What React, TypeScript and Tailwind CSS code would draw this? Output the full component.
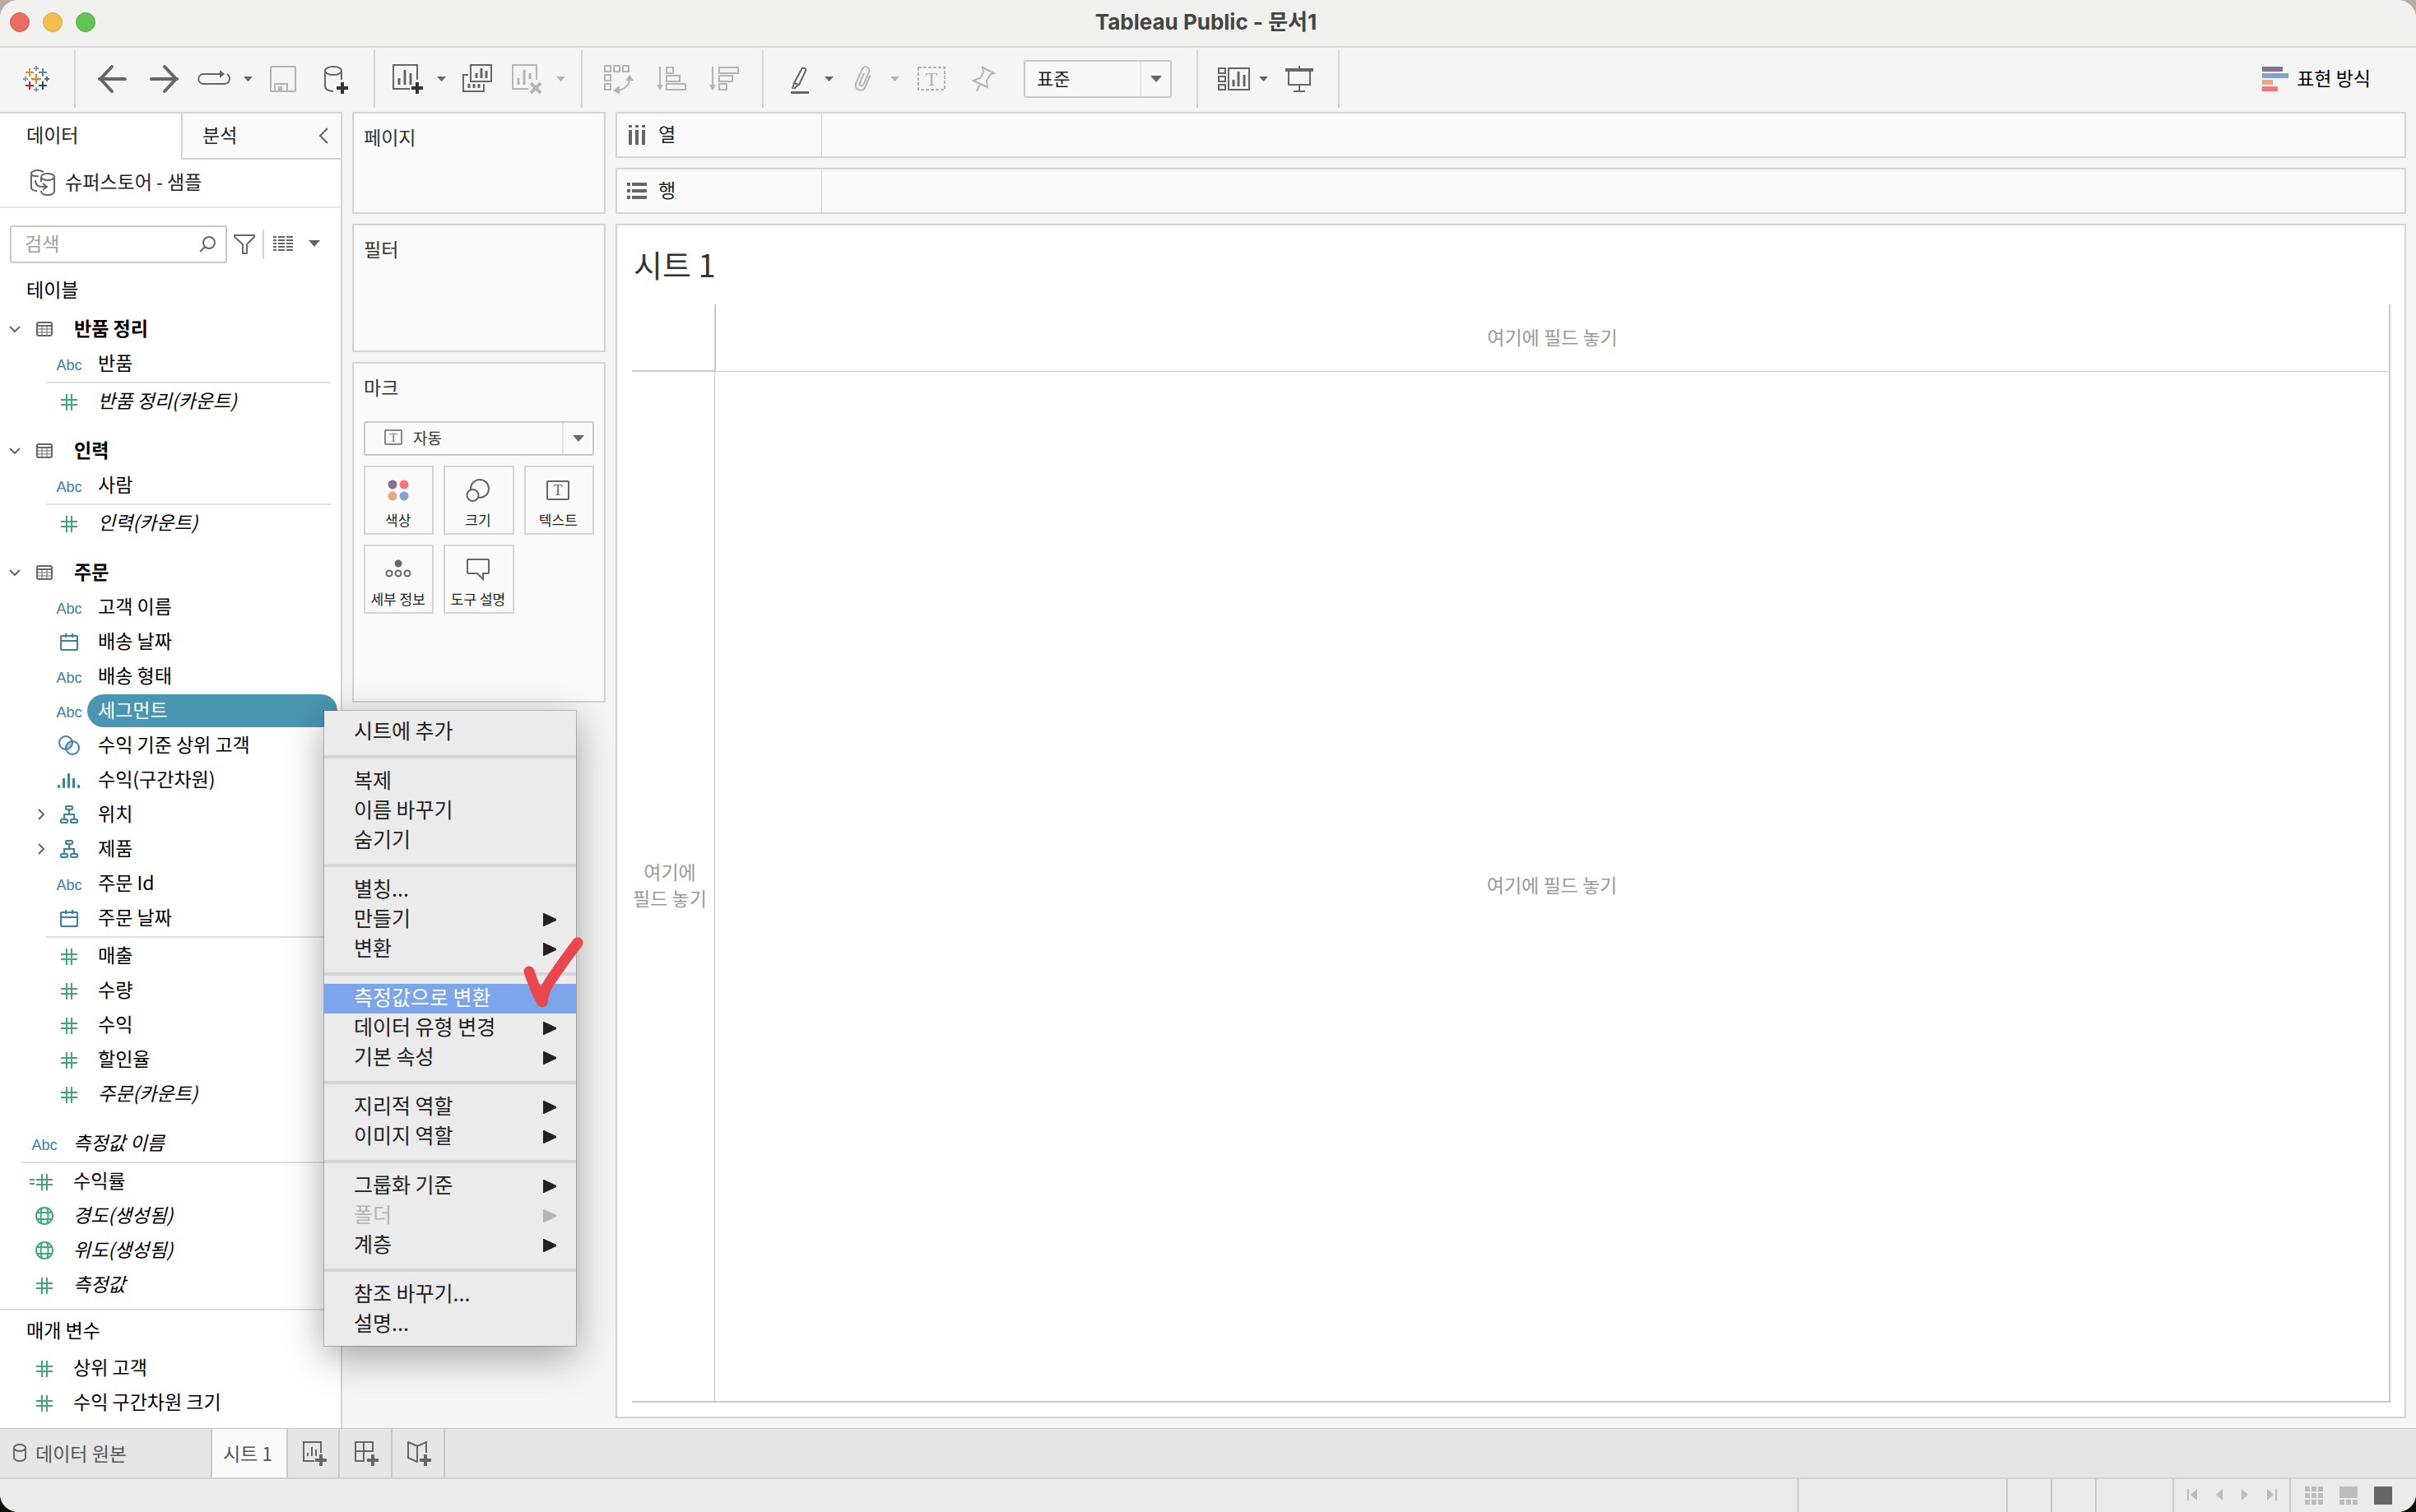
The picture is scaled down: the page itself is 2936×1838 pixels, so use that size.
import type { ReactNode } from 'react';

type FieldIcon = 'abc' | 'date' | 'set' | 'bin' | 'tree' | 'num' | 'calc' | 'geo';
type Field = { name: string; icon: FieldIcon; italic?: boolean; expandable?: boolean; selected?: boolean };
type MenuEntry = { label: string; sub?: boolean; disabled?: boolean; active?: boolean };

const BLUE = '#3a82a3';
const GREEN = '#43a57c';
const GRAY = '#666666';
const MUTED = '#b4b4b4';

const orderDimensions: Field[] = [
    { name: '고객 이름', icon: 'abc' },
    { name: '배송 날짜', icon: 'date' },
    { name: '배송 형태', icon: 'abc' },
    { name: '세그먼트', icon: 'abc', selected: true },
    { name: '수익 기준 상위 고객', icon: 'set' },
    { name: '수익(구간차원)', icon: 'bin' },
    { name: '위치', icon: 'tree', expandable: true },
    { name: '제품', icon: 'tree', expandable: true },
    { name: '주문 Id', icon: 'abc' },
    { name: '주문 날짜', icon: 'date' },
];

const orderMeasures: Field[] = [
    { name: '매출', icon: 'num' },
    { name: '수량', icon: 'num' },
    { name: '수익', icon: 'num' },
    { name: '할인율', icon: 'num' },
    { name: '주문(카운트)', icon: 'num', italic: true },
];

const tables: { name: string; dimensions: Field[]; measures: Field[] }[] = [
    {
        name: '반품 정리',
        dimensions: [{ name: '반품', icon: 'abc' }],
        measures: [{ name: '반품 정리(카운트)', icon: 'num', italic: true }],
    },
    {
        name: '인력',
        dimensions: [{ name: '사람', icon: 'abc' }],
        measures: [{ name: '인력(카운트)', icon: 'num', italic: true }],
    },
    { name: '주문', dimensions: orderDimensions, measures: orderMeasures },
];

const looseMeasures: Field[] = [
    { name: '수익률', icon: 'calc' },
    { name: '경도(생성됨)', icon: 'geo', italic: true },
    { name: '위도(생성됨)', icon: 'geo', italic: true },
    { name: '측정값', icon: 'num', italic: true },
];

const parameters: Field[] = [
    { name: '상위 고객', icon: 'num' },
    { name: '수익 구간차원 크기', icon: 'num' },
];

const menuGroups: MenuEntry[][] = [
    [{ label: '시트에 추가' }],
    [{ label: '복제' }, { label: '이름 바꾸기' }, { label: '숨기기' }],
    [{ label: '별칭...' }, { label: '만들기', sub: true }, { label: '변환', sub: true }],
    [{ label: '측정값으로 변환', active: true }, { label: '데이터 유형 변경', sub: true }, { label: '기본 속성', sub: true }],
    [{ label: '지리적 역할', sub: true }, { label: '이미지 역할', sub: true }],
    [{ label: '그룹화 기준', sub: true }, { label: '폴더', sub: true, disabled: true }, { label: '계층', sub: true }],
    [{ label: '참조 바꾸기...' }, { label: '설명...' }],
];

/* ---------- icons ---------- */

// Toolbar glyphs share one 40x40 box
function Glyph({ color = GRAY, children }: { color?: string; children: ReactNode }) {
    return (
        <svg width="40" height="40" viewBox="0 0 40 40" fill="none" stroke={color} strokeWidth="2" className="shrink-0">
            {children}
        </svg>
    );
}

function Caret({ color = GRAY, className = 'w-[11px] h-[6px]' }: { color?: string; className?: string }) {
    return (
        <svg viewBox="0 0 12 7" preserveAspectRatio="none" className={className}>
            <path d="M0 0h12L6 7z" fill={color} />
        </svg>
    );
}

function Plus({ x, y, r, w, color }: { x: number; y: number; r: number; w: number; color: string }) {
    return <path d={`M${x - r} ${y}h${2 * r}M${x} ${y - r}v${2 * r}`} stroke={color} strokeWidth={w} />;
}

function Logo() {
    return (
        <Glyph>
            <Plus x={20} y={20} r={6} w={2} color="#eb7a2e" />
            <Plus x={12} y={12} r={5} w={2} color="#e8912c" />
            <Plus x={28} y={12} r={5} w={2} color="#5c8797" />
            <Plus x={12} y={28} r={5} w={2} color="#c72035" />
            <Plus x={28} y={28} r={5} w={2} color="#1f447e" />
            <Plus x={20} y={7} r={3} w={2} color="#7b9fa8" />
            <Plus x={20} y={33} r={3} w={2} color="#8f9bc0" />
            <Plus x={7} y={20} r={3} w={2} color="#72a5ae" />
            <Plus x={33} y={20} r={3} w={2} color="#5b6591" />
        </Glyph>
    );
}

function FieldGlyph({ icon }: { icon: FieldIcon }) {
    if (icon === 'abc') return <span className="text-[18px] leading-[24px] pt-[3px] text-[#3a82a3] font-['Liberation_Sans',sans-serif]">Abc</span>;
    if (icon === 'date')
        return (
            <svg width="24" height="24" fill="none" stroke={BLUE} strokeWidth="2">
                <rect x="2" y="5" width="20" height="17" rx="1" />
                <path d="M2 11h20M8 2v5M16 2v5" />
            </svg>
        );
    if (icon === 'set')
        return (
            <svg width="28" height="26" fill="none" stroke={BLUE} strokeWidth="2">
                <path d="M18 9a8 8 0 0 0-8 8 8 8 0 0 0 8-8z" fill="#a9c8d6" stroke="none" />
                <circle cx="10" cy="10" r="8" />
                <circle cx="18" cy="16" r="8" />
            </svg>
        );
    if (icon === 'bin')
        return (
            <svg width="28" height="22" fill={BLUE}>
                <rect x="0" y="17" width="3" height="4" rx="1" />
                <rect x="6" y="9" width="3" height="12" rx="1" />
                <rect x="12" y="3" width="3" height="18" rx="1" />
                <rect x="18" y="9" width="3" height="12" rx="1" />
                <rect x="24" y="17" width="3" height="4" rx="1" />
            </svg>
        );
    if (icon === 'tree')
        return (
            <svg width="24" height="24" fill="none" stroke={BLUE} strokeWidth="2">
                <rect x="8" y="2" width="8" height="4" rx="1" />
                <rect x="2" y="18" width="8" height="4" rx="1" />
                <rect x="14" y="18" width="8" height="4" rx="1" />
                <path d="M12 6v6M6 18v-6h12v6" />
            </svg>
        );
    if (icon === 'geo')
        return (
            <svg width="24" height="24" fill="none" stroke={GREEN} strokeWidth="2">
                <circle cx="12" cy="12" r="10" />
                <path d="M3 8h18M3 16h18M9 2q-3 10 0 20M15 2q3 10 0 20" />
            </svg>
        );
    return (
        <svg width="36" height="24" fill="none" stroke={GREEN} strokeWidth="2">
            <path d="M8 10h20M8 16h20M15 3v20M21 3v20" />
            {icon === 'calc' && <path d="M0 10h6M0 15h6" />}
        </svg>
    );
}

function TableGlyph() {
    return (
        <svg width="20" height="18" fill="none" stroke={GRAY} strokeWidth="2">
            <rect x="1" y="1" width="18" height="16" rx="2" />
            <path d="M1 5h18" />
            <path d="M1 9h18M1 13h18M7 5v12M13 5v12" strokeWidth="1" />
        </svg>
    );
}

function Chevron({ open }: { open?: boolean }) {
    return (
        <svg width="14" height="14" fill="none" stroke={GRAY} strokeWidth="2">
            <path d={open ? 'M1 4l6 6 6-6' : 'M4 1l6 6-6 6'} />
        </svg>
    );
}

/* ---------- toolbar ---------- */

function Tool({ label, width, children }: { label: string; width: string; children: ReactNode }) {
    return (
        <button aria-label={label} className={`${width} h-[60px] flex items-center justify-center shrink-0`}>
            {children}
        </button>
    );
}

function ToolGroup({ className, children }: { className: string; children: ReactNode }) {
    return <div className={`${className} h-[70px] flex items-center border-r-2 border-[#d4d4d4]`}>{children}</div>;
}

function Toolbar() {
    return (
        <div className="h-[78px] pb-[2px] flex items-center bg-[#f5f5f5]">
            <ToolGroup className="pl-6 pr-[26px]">
                <Logo />
            </ToolGroup>
            <ToolGroup className="px-3">
                <Tool label="뒤로" width="w-[64px]">
                    <Glyph><path d="M20 5L6 20l14 15M5 20h31" strokeWidth="4" strokeLinecap="round" strokeLinejoin="round" /></Glyph>
                </Tool>
                <Tool label="앞으로" width="w-[64px]">
                    <Glyph><path d="M20 5l14 15-14 15M35 20H4" strokeWidth="4" strokeLinecap="round" strokeLinejoin="round" /></Glyph>
                </Tool>
                <Tool label="다시 재생" width="w-[56px]">
                    <Glyph>
                        <path d="M27 14H8c-9 0-9 12 0 12h24c8 0 9-9 4-12" />
                        <path d="M27 9l6 5-6 5z" fill={GRAY} stroke="none" />
                    </Glyph>
                </Tool>
                <Tool label="재생 옵션" width="w-[26px]"><Caret /></Tool>
                <Tool label="저장" width="w-[60px]">
                    <Glyph color={MUTED}>
                        <rect x="5" y="5" width="30" height="30" rx="1" />
                        <path d="M10 35V26h15v9" />
                        <path d="M14 29h5v5h-5z" fill={MUTED} stroke="none" />
                    </Glyph>
                </Tool>
                <Tool label="새 데이터 원본" width="w-[68px]">
                    <Glyph>
                        <ellipse cx="17" cy="10" rx="10" ry="5" />
                        <path d="M7 10v19q0 5 10 6M27 10v11" />
                        <Plus x={28} y={31} r={7} w={4} color="#333333" />
                    </Glyph>
                </Tool>
            </ToolGroup>
            <ToolGroup className="px-3">
                <Tool label="새 워크시트" width="w-[56px]">
                    <Glyph>
                        <path d="M22 32H2V3h29v18" />
                        <path d="M9 19v8M16 9v18M23 13v14" strokeWidth="3" />
                        <Plus x={31} y={31} r={7} w={4} color="#333333" />
                    </Glyph>
                </Tool>
                <Tool label="새 워크시트 옵션" width="w-[24px]"><Caret /></Tool>
                <Tool label="복제" width="w-[64px]">
                    <Glyph>
                        <rect x="12" y="3" width="25" height="20" />
                        <path d="M9 15H3v20h25v-9" />
                        <path d="M19 13v6M25 7v12M31 10v9M10 26v5M16 26v5M22 26v5" strokeWidth="3" />
                    </Glyph>
                </Tool>
                <Tool label="시트 지우기" width="w-[56px]">
                    <Glyph color={MUTED}>
                        <path d="M22 32H3V3h29v18" />
                        <path d="M10 19v8M17 9v18M24 13v7" strokeWidth="3" />
                        <path d="M25 25l12 12M37 25L25 37" strokeWidth="4" />
                    </Glyph>
                </Tool>
                <Tool label="지우기 옵션" width="w-[26px]"><Caret color={MUTED} /></Tool>
            </ToolGroup>
            <ToolGroup className="pl-3 pr-[14px]">
                <Tool label="행과 열 바꾸기" width="w-[64px]">
                    <Glyph color={MUTED}>
                        <path d="M3 4h7v7H3zM14 4h7v7h-7zM25 4h7v7h-7zM3 15h7v7H3zM3 26h7v7H3z" />
                        <path d="M33 19q0 12-14 15" />
                        <path d="M28 22l5-7 5 7zM21 28l-8 6 8 5z" fill={MUTED} stroke="none" />
                    </Glyph>
                </Tool>
                <Tool label="오름차순 정렬" width="w-[64px]">
                    <Glyph color={MUTED}>
                        <path d="M6 5v24M14 6h8v7h-8zM14 16h16v7H14zM14 26h23v7H14z" />
                        <path d="M2 27h8l-4 7z" fill={MUTED} stroke="none" />
                    </Glyph>
                </Tool>
                <Tool label="내림차순 정렬" width="w-[64px]">
                    <Glyph color={MUTED}>
                        <path d="M6 5v24M14 6h23v7H14zM14 16h16v7H14zM14 26h9v7h-9z" />
                        <path d="M2 27h8l-4 7z" fill={MUTED} stroke="none" />
                    </Glyph>
                </Tool>
            </ToolGroup>
            <ToolGroup className="pl-4 pr-[30px]">
                <Tool label="하이라이트" width="w-[56px]">
                    <Glyph>
                        <path d="M23 6.5q4.5 0 4.5 2.5L19 27l-6-2zM13 25l-2 7M18 27l-5 5" />
                        <path d="M9 35h22v3H9z" fill={GRAY} stroke="none" />
                    </Glyph>
                </Tool>
                <Tool label="하이라이트 옵션" width="w-[14px]"><Caret /></Tool>
                <Tool label="그룹 멤버" width="w-[64px]">
                    <Glyph color={MUTED}>
                        <path transform="rotate(24 22 20)" d="M29 12v16a6 6 0 0 1-12 0V9a4.5 4.5 0 0 1 9 0v17a2.2 2.2 0 0 1-5 0V13" />
                    </Glyph>
                </Tool>
                <Tool label="그룹 옵션" width="w-[18px]"><Caret color={MUTED} /></Tool>
                <Tool label="마크 레이블 표시" width="w-[72px]">
                    <Glyph color={MUTED}>
                        <rect x="4" y="6" width="32" height="27" strokeDasharray="4 2" />
                        <text x="20" y="28" textAnchor="middle" fontSize="24" fill={MUTED} stroke="none" fontFamily="Liberation Serif, serif">T</text>
                    </Glyph>
                </Tool>
                <Tool label="축 고정" width="w-[54px]">
                    <Glyph color={MUTED}>
                        <path d="M19 6l14 7-4 1-5 8 1 8L8 22l8-3 4-7zM16 26l-4 9" />
                    </Glyph>
                </Tool>
                <div className="relative ml-[22px] w-[180px] h-[46px]">
                    <select aria-label="맞춤" className="appearance-none w-full h-full pl-[14px] pb-[4px] text-[22px] leading-[32px] text-[#222] bg-[#f8f8f8] border-2 border-[#c9c9c9] rounded-[3px]">
                        <option>표준</option>
                    </select>
                    <span className="pointer-events-none absolute right-[2px] top-[2px] h-[42px] w-[37px] border-l-2 border-[#e4e4e4] flex items-center justify-center">
                        <Caret className="w-[14px] h-[8px]" />
                    </span>
                </div>
            </ToolGroup>
            <ToolGroup className="pl-4 pr-[10px]">
                <Tool label="카드 표시/숨기기" width="w-[56px]">
                    <Glyph>
                        <path d="M1 7h8v6H1zM1 17h8v6H1zM1 27h8v6H1zM13 7h25v26H13z" />
                        <path d="M19 21v8M25 11v18M32 15v14" strokeWidth="3" />
                    </Glyph>
                </Tool>
                <Tool label="카드 옵션" width="w-[14px]"><Caret /></Tool>
                <Tool label="프레젠테이션 모드" width="w-[74px]">
                    <Glyph>
                        <path d="M3 9h34" strokeWidth="4" />
                        <path d="M7 10v17h26V10M20 4v4M20 27v8M13 35h14" />
                    </Glyph>
                </Tool>
            </ToolGroup>
            <button className="ml-auto mr-[55px] flex items-center gap-[10px] text-[23px] leading-[32px] text-black">
                <svg width="32" height="30">
                    <path d="M0 0h25v6H0z" fill="#866f96" />
                    <path d="M0 8h32v6H0z" fill="#82a3ca" />
                    <path d="M0 16h13v6H0z" fill="#f2a57c" />
                    <path d="M0 24h19v6H0z" fill="#f9707f" />
                </svg>
                <span className="pb-[4px]">표현 방식</span>
            </button>
        </div>
    );
}

/* ---------- data pane ---------- */

function ContextMenu() {
    return (
        <div role="menu" className="absolute z-20 left-[394px] top-[21px] w-[306px] py-2 bg-[#ebebeb] shadow-[0_0_0_1px_rgba(0,0,0,0.2),0_12px_44px_rgba(0,0,0,0.35)]">
            {menuGroups.map((group, i) => (
                <div key={i} className={i > 0 ? 'mt-[10px] border-t-4 border-[#d5d5d5] pt-[10px]' : ''}>
                    {group.map(item => (
                        <button
                            key={item.label}
                            role="menuitem"
                            disabled={item.disabled}
                            className={`w-full h-[36px] pl-9 pr-6 flex items-center justify-between text-[25px] leading-[32px] ${item.active ? 'bg-[#7da5ec] text-white' : item.disabled ? 'text-[#b4b4b4]' : 'text-[#222]'}`}
                        >
                            <span className="pb-[6px]">{item.label}</span>
                            {item.sub && (
                                <svg width="16" height="16" fill="currentColor">
                                    <path d="M0 0h1l15 7v2L1 16H0z" />
                                </svg>
                            )}
                        </button>
                    ))}
                </div>
            ))}
            <svg width="76" height="90" fill="none" stroke="#ea464b" strokeLinecap="round" strokeLinejoin="round" className="pointer-events-none absolute left-[241px] top-[274px]">
                <path d="M8 43q8 24 16 37 2-14 8-23Q50 30 67 8" strokeWidth="13" />
            </svg>
        </div>
    );
}

function FieldRow({ field, nested }: { field: Field; nested?: boolean }) {
    return (
        <li className={`relative h-[42px] flex items-center pr-1 ${nested ? 'pl-[30px]' : ''}`}>
            <span className="w-[36px] flex justify-center pl-[3px] shrink-0">{field.expandable && <Chevron />}</span>
            <span className="w-[36px] flex justify-center shrink-0">
                <FieldGlyph icon={field.icon} />
            </span>
            <span className={`ml-1 flex-1 h-[40px] pl-[13px] rounded-full text-[23px] leading-[36px] whitespace-nowrap ${field.italic ? 'italic' : ''} ${field.selected ? 'bg-[#4996b3] text-white' : 'text-black'}`}>
                {field.name}
            </span>
            {field.selected && <ContextMenu />}
        </li>
    );
}

function Divider({ className }: { className: string }) {
    return <li aria-hidden="true" className={`${className} my-px mr-3 h-[2px] bg-[#e0e0e0]`} />;
}

function DataPane() {
    return (
        <aside className="w-[416px] shrink-0 flex flex-col bg-white border-r-2 border-[#d4d4d4]">
            <div className="flex border-t-2 border-[#d4d4d4] text-[23px] text-[#222]">
                <button className="w-[220px] h-[56px] pl-8 pb-[6px] text-left leading-[32px]">데이터</button>
                <div className="flex-1 flex items-center justify-between pl-6 pr-[14px] bg-[#fafafa] border-l-2 border-b-2 border-[#d4d4d4]">
                    <button className="leading-[32px] pb-[4px]">분석</button>
                    <button aria-label="창 최소화">
                        <svg width="14" height="20" fill="none" stroke={GRAY} strokeWidth="2">
                            <path d="M12 1L3 10l9 9" />
                        </svg>
                    </button>
                </div>
            </div>
            <button className="h-[59px] pl-9 pb-[2px] flex items-center gap-[11px] text-[23px] leading-[32px] text-[#222] border-b-2 border-[#e6e6e6]">
                <svg width="32" height="32" fill="none" stroke={GRAY} strokeWidth="2">
                    <ellipse cx="22" cy="9" rx="8" ry="4" />
                    <path d="M14 9v6M30 9v18q-1 4-8 4-7 0-8-4v-1" />
                    <path d="M17 3Q9-1 3 3q-2 2 0 4 4 2 8 1M2 5v18q2 3 7 3" />
                    <path d="M7 13q0 8 8 8h5M16 17l5 4-5 4" />
                </svg>
                <span className="pb-1">슈퍼스토어 - 샘플</span>
            </button>
            <div className="mt-[21px] pl-3 flex items-center">
                <div className="relative">
                    <input aria-label="검색" placeholder="검색" className="w-[264px] h-[46px] pl-[16px] pb-[4px] text-[23px] border-2 border-[#c9c9c9] rounded-[3px] placeholder:text-[#a0a0a0]" />
                    <svg width="20" height="20" fill="none" stroke={GRAY} strokeWidth="2" className="pointer-events-none absolute right-[14px] top-[13px]">
                        <circle cx="12" cy="8" r="7" />
                        <path d="M7 13l-6 6" />
                    </svg>
                </div>
                <button aria-label="필터" className="ml-2">
                    <svg width="26" height="26" fill="none" stroke={GRAY} strokeWidth="2" strokeLinejoin="round">
                        <path d="M1 2h24v2L16 13v11h-5V13L1 4z" />
                    </svg>
                </button>
                <button aria-label="보기 기준" className="ml-[9px] h-[36px] pl-[11px] pb-[2px] flex items-center gap-[19px] border-l-2 border-[#d4d4d4]">
                    <svg width="24" height="18" stroke={GRAY} strokeWidth="2">
                        <path d="M0 1h4M6 1h8M16 1h8M0 5h4M6 5h8M16 5h8M0 9h4M6 9h8M16 9h8M0 13h4M6 13h8M16 13h8M0 17h4M6 17h8M16 17h8" />
                    </svg>
                    <Caret className="w-[14px] h-[8px]" />
                </button>
            </div>
            <h2 className="mt-[15px] mb-3 pl-8 text-[23px] leading-[32px] text-black">테이블</h2>
            {tables.map(table => (
                <section key={table.name} className="mb-[18px]">
                    <h3 className="h-[42px] flex items-center text-[23px] font-bold text-black">
                        <span className="w-[36px] flex justify-center"><Chevron open /></span>
                        <span className="w-[36px] flex justify-center"><TableGlyph /></span>
                        <span className="pl-[18px] pb-[4px] leading-[32px]">{table.name}</span>
                    </h3>
                    <ul>
                        {table.dimensions.map(f => <FieldRow key={f.name} field={f} nested />)}
                        <Divider className="ml-14" />
                        {table.measures.map(f => <FieldRow key={f.name} field={f} nested />)}
                    </ul>
                </section>
            ))}
            <ul>
                <FieldRow field={{ name: '측정값 이름', icon: 'abc', italic: true }} />
                <Divider className="ml-[26px]" />
                {looseMeasures.map(f => <FieldRow key={f.name} field={f} />)}
            </ul>
            <section className="mt-2 pb-2 border-t-2 border-[#e0e0e0]">
                <h2 className="h-[49px] pl-8 pt-[7px] text-[23px] leading-[32px] text-black">매개 변수</h2>
                <ul>
                    {parameters.map(f => <FieldRow key={f.name} field={f} />)}
                </ul>
            </section>
        </aside>
    );
}

/* ---------- cards ---------- */

const MARK_BUTTONS: { label: string; icon: ReactNode }[] = [
    {
        label: '색상',
        icon: (
            <svg width="32" height="32">
                <circle cx="9" cy="9" r="5.5" fill="#866f96" />
                <circle cx="23" cy="9" r="5.5" fill="#f9707f" />
                <circle cx="9" cy="23" r="5.5" fill="#f2a57c" />
                <circle cx="23" cy="23" r="5.5" fill="#82a3ca" />
            </svg>
        ),
    },
    {
        label: '크기',
        icon: (
            <svg width="32" height="32" fill="none" stroke={GRAY} strokeWidth="2">
                <circle cx="18" cy="14" r="11" />
                <circle cx="9.5" cy="22" r="7" fill="#fafafa" />
            </svg>
        ),
    },
    {
        label: '텍스트',
        icon: (
            <svg width="32" height="32" fill="none" stroke={GRAY} strokeWidth="2">
                <rect x="3" y="5" width="26" height="22" rx="1" />
                <text x="16" y="22" textAnchor="middle" fontSize="18" fill={GRAY} stroke="none" fontFamily="Liberation Serif, serif">T</text>
            </svg>
        ),
    },
    {
        label: '세부 정보',
        icon: (
            <svg width="32" height="32" fill="none" stroke={GRAY} strokeWidth="2">
                <circle cx="16" cy="9" r="4.5" fill={GRAY} stroke="none" />
                <circle cx="5" cy="21" r="3.5" />
                <circle cx="16" cy="21" r="3.5" />
                <circle cx="27" cy="21" r="3.5" />
            </svg>
        ),
    },
    {
        label: '도구 설명',
        icon: (
            <svg width="32" height="32" fill="none" stroke={GRAY} strokeWidth="2">
                <path d="M4 4h24q1 0 1 1v15q0 1-1 1h-6v7l-7-7H4q-1 0-1-1V5q0-1 1-1z" />
            </svg>
        ),
    },
];

function Card({ title, className, children }: { title: string; className: string; children?: ReactNode }) {
    return (
        <section className={`${className} px-3 pt-3 bg-[#fafafa] border-2 border-[#d4d4d4]`}>
            <h2 className="text-[23px] leading-[32px] text-[#333]">{title}</h2>
            {children}
        </section>
    );
}

function Cards() {
    return (
        <div className="w-[308px] shrink-0 ml-3 flex flex-col gap-3">
            <Card title="페이지" className="h-[124px]" />
            <Card title="필터" className="h-[156px]" />
            <Card title="마크" className="h-[414px]">
                <div className="relative mt-[26px] h-[42px]">
                    <select aria-label="마크 유형" className="appearance-none w-full h-full pl-[58px] pb-[2px] text-[19px] leading-[28px] text-[#333] bg-[#fafafa] border-2 border-[#c9c9c9] rounded-[3px]">
                        <option>자동</option>
                    </select>
                    <svg width="22" height="20" fill="none" stroke="#888" strokeWidth="2" className="pointer-events-none absolute left-[25px] top-[10px]">
                        <rect x="1" y="1" width="20" height="17" rx="1" />
                        <text x="11" y="15" textAnchor="middle" fontSize="15" fill="#777" stroke="none" fontFamily="Liberation Serif, serif">T</text>
                    </svg>
                    <span className="pointer-events-none absolute right-[2px] top-[2px] h-[38px] w-[37px] border-l-2 border-[#e4e4e4] flex items-center justify-center">
                        <Caret className="w-[14px] h-[8px]" />
                    </span>
                </div>
                <div className="mt-3 grid grid-cols-3 gap-3">
                    {MARK_BUTTONS.map(b => (
                        <button key={b.label} className="h-[84px] pt-3 pr-[2px] flex flex-col items-center gap-2 text-[17px] leading-[24px] text-[#222] whitespace-nowrap border-2 border-[#d4d4d4]">
                            {b.icon}
                            {b.label}
                        </button>
                    ))}
                </div>
            </Card>
        </div>
    );
}

/* ---------- worksheet ---------- */

function Shelf({ label, icon }: { label: string; icon: ReactNode }) {
    return (
        <div className="h-[56px] flex bg-[#fafafa] border-2 border-[#d4d4d4]">
            <div className="w-[249px] pl-3 flex items-center gap-3 border-r border-[#d4d4d4] text-[23px] leading-[32px] text-[#222]">
                {icon}
                <span className="pb-[4px]">{label}</span>
            </div>
        </div>
    );
}

function Worksheet() {
    return (
        <main className="flex-1 ml-3 mr-3 mb-3 flex flex-col gap-3">
            <Shelf
                label="열"
                icon={
                    <svg width="26" height="26" stroke={GRAY} strokeWidth="4">
                        <path d="M4 1v3M12 1v3M20 1v3M4 7v18M12 7v18M20 7v18" />
                    </svg>
                }
            />
            <Shelf
                label="행"
                icon={
                    <svg width="26" height="26" stroke={GRAY} strokeWidth="4">
                        <path d="M0 5h4M6 5h18M0 13h4M6 13h18M0 21h4M6 21h18" />
                    </svg>
                }
            />
            <section className="flex-1 flex flex-col pl-[18px] pr-[17px] pb-[17px] bg-white border-2 border-[#d4d4d4]">
                <h1 className="h-[96px] pl-[2px] pt-[19px] text-[38px] leading-[56px] text-[#333]">시트 1</h1>
                <div className="flex-1 grid grid-cols-[100px_1fr] grid-rows-[82px_1fr] text-[23px] leading-[32px] text-[#999] text-center border-r-2 border-b-2 border-[#c9c9c9]">
                    <div className="border-b-2 border-[#c9c9c9]" />
                    <div className="pb-[3px] flex items-center justify-center border-l-2 border-b border-[#c9c9c9]">여기에 필드 놓기</div>
                    <div className="pb-[5px] flex items-center justify-center pr-[8px] whitespace-nowrap">여기에<br />필드 놓기</div>
                    <div className="pb-[5px] flex items-center justify-center border-l border-[#c9c9c9]">여기에 필드 놓기</div>
                </div>
            </section>
        </main>
    );
}

/* ---------- bottom bars ---------- */

function SheetTabs() {
    return (
        <div className="h-[62px] flex bg-[#e6e6e6] border-t border-b-2 border-t-[#c4c4c4] border-b-[#d2d2d2] text-[23px] leading-[32px] text-[#555]">
            <button className="w-[258px] pl-4 pb-[2px] flex items-center gap-[11px] border-r-2 border-[#c9c9c9]">
                <svg width="16" height="22" fill="none" stroke={GRAY} strokeWidth="2">
                    <ellipse cx="8" cy="5" rx="7" ry="4" />
                    <path d="M1 5v12q1 4 7 4t7-4V5" />
                </svg>
                데이터 원본
            </button>
            <button className="w-[92px] pb-[2px] pr-[4px] bg-[#fafafa] border-r-2 border-[#c9c9c9]">시트 1</button>
            <button aria-label="새 워크시트" className="w-[63px] pl-1 flex items-center justify-center border-r-2 border-[#c9c9c9]">
                <svg width="30" height="30" fill="none" stroke={GRAY} strokeWidth="2">
                    <path d="M14 24H1V1h21v13" />
                    <path d="M6 14v4M11 7v11M16 10v8" />
                    <Plus x={22} y={23} r={7} w={4} color={GRAY} />
                </svg>
            </button>
            <button aria-label="새 대시보드" className="w-[64px] pl-1 flex items-center justify-center border-r-2 border-[#c9c9c9]">
                <svg width="30" height="30" fill="none" stroke={GRAY} strokeWidth="2">
                    <path d="M12 24H1V1h21v11H1M11 1v23" />
                    <Plus x={22} y={23} r={7} w={4} color={GRAY} />
                </svg>
            </button>
            <button aria-label="새 스토리" className="w-[64px] pl-1 flex items-center justify-center border-r-2 border-[#c9c9c9]">
                <svg width="30" height="30" fill="none" stroke={GRAY} strokeWidth="2">
                    <path d="M12 25L1 20V1l11 5zM12 6l11-5v13" />
                    <Plus x={22} y={23} r={7} w={4} color={GRAY} />
                </svg>
            </button>
        </div>
    );
}

function StatusBar() {
    return (
        <div className="h-[40px] flex justify-end bg-[#ebebeb]">
            <div className="w-[254px] border-l-2 border-[#c9c9c9]" />
            <div className="w-[54px] border-l-2 border-[#c9c9c9]" />
            <div className="w-[54px] border-l-2 border-[#c9c9c9]" />
            <div className="w-[94px] border-l-2 border-[#c9c9c9]" />
            <div className="w-[142px] pl-4 pr-[15px] pb-[2px] flex items-center justify-between border-l-2 border-[#c9c9c9]">
                <button aria-label="처음"><svg width="12" height="14" fill="#bcbcbc"><path d="M0 0h2v14H0zM12 0v14L4 7z" /></svg></button>
                <button aria-label="이전"><svg width="8" height="14" fill="#bcbcbc"><path d="M8 0v14L0 7z" /></svg></button>
                <button aria-label="다음"><svg width="8" height="14" fill="#bcbcbc"><path d="M0 0v14l8-7z" /></svg></button>
                <button aria-label="마지막"><svg width="12" height="14" fill="#bcbcbc"><path d="M10 0h2v14h-2zM0 0v14l8-7z" /></svg></button>
            </div>
            <div className="w-[154px] pl-[17px] flex items-center gap-5 border-l-2 border-[#c9c9c9]">
                <button aria-label="시트 정렬기">
                    <svg width="22" height="22" fill="#bcbcbc"><path d="M0 0h6v6H0zM8 0h6v6H8zM16 0h6v6h-6zM0 8h6v6H0zM8 8h6v6H8zM16 8h6v6h-6zM0 16h6v6H0zM8 16h6v6H8zM16 16h6v6h-6z" /></svg>
                </button>
                <button aria-label="필름 스트립">
                    <svg width="22" height="22" fill="#bcbcbc"><path d="M0 0h22v14H0zM0 16h6v6H0zM8 16h6v6H8zM16 16h6v6h-6z" /></svg>
                </button>
                <button aria-label="시트 탭">
                    <svg width="22" height="22" fill={GRAY}><rect width="22" height="22" rx="1" /></svg>
                </button>
            </div>
        </div>
    );
}

export default function App() {
    return (
        <div className="min-h-screen flex bg-linear-to-b from-[#b5aca3] to-[#0c0d06] font-['Noto_Sans_CJK_KR',sans-serif]">
            <div className="flex-1 flex flex-col rounded-[22px] overflow-hidden bg-[#f5f5f5]">
                <header className="h-[58px] grid grid-cols-3 items-center pb-[2px] bg-[#f1f1ef] border-b-2 border-[#d6d6d6]">
                    <div className="pl-3 flex gap-4">
                        <button aria-label="닫기" className="size-6 rounded-full bg-[#ed6b60] border border-[#d75b50]" />
                        <button aria-label="최소화" className="size-6 rounded-full bg-[#f5bf4f] border border-[#dca73f]" />
                        <button aria-label="확대" className="size-6 rounded-full bg-[#61c554] border border-[#55ab48]" />
                    </div>
                    <h1 className="pr-[5px] text-center text-[26px] leading-[32px] font-bold text-[#444] font-[Inter,'Noto_Sans_CJK_KR',sans-serif]">Tableau Public - 문서1</h1>
                </header>
                <Toolbar />
                <div className="flex-1 flex">
                    <DataPane />
                    <Cards />
                    <Worksheet />
                </div>
                <SheetTabs />
                <StatusBar />
            </div>
        </div>
    );
}
